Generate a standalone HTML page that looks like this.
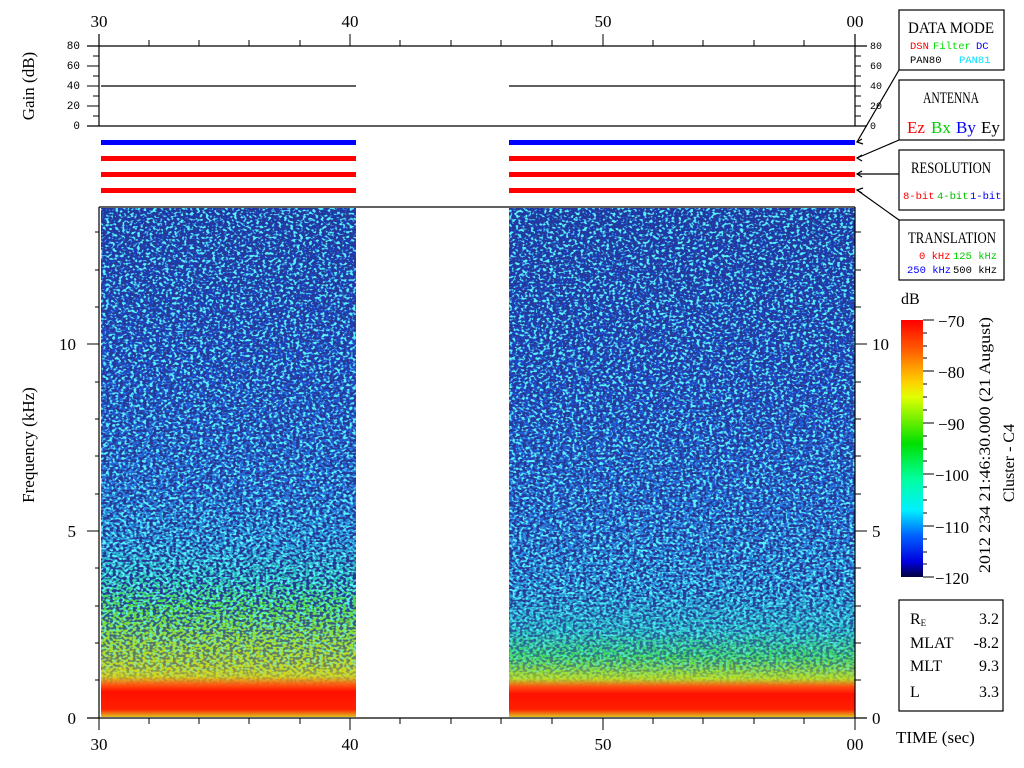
<!DOCTYPE html>
<html><head><meta charset="utf-8"><style>
html,body{margin:0;padding:0;background:#fff;width:1024px;height:768px;overflow:hidden}
svg{display:block}
.t{font-family:"Liberation Serif",serif;fill:#000}
.m{font-family:"Liberation Mono",monospace}
</style></head><body>
<svg width="1024" height="768" viewBox="0 0 1024 768" xmlns="http://www.w3.org/2000/svg">
<defs>
<linearGradient id="gL" x1="0" y1="0" x2="0" y2="1">
<stop offset="0" stop-color="#1a36b0"/>
<stop offset="0.3" stop-color="#1e4ad0"/>
<stop offset="0.55" stop-color="#2470e0"/>
<stop offset="0.66" stop-color="#28a0e0"/>
<stop offset="0.73" stop-color="#28c8b0"/>
<stop offset="0.78" stop-color="#50dc40"/>
<stop offset="0.85" stop-color="#a0e028"/>
<stop offset="0.92" stop-color="#d8d818"/>
<stop offset="0.935" stop-color="#ff6010"/>
<stop offset="0.95" stop-color="#ff1000"/>
<stop offset="0.985" stop-color="#ff2000"/>
<stop offset="1" stop-color="#e0c020"/>
</linearGradient>
<linearGradient id="gR" x1="0" y1="0" x2="0" y2="1">
<stop offset="0" stop-color="#1a36b0"/>
<stop offset="0.35" stop-color="#1e4ad0"/>
<stop offset="0.6" stop-color="#2470e0"/>
<stop offset="0.74" stop-color="#2898e0"/>
<stop offset="0.83" stop-color="#28c0c0"/>
<stop offset="0.88" stop-color="#40d860"/>
<stop offset="0.925" stop-color="#c0e020"/>
<stop offset="0.94" stop-color="#ff5010"/>
<stop offset="0.955" stop-color="#ff1000"/>
<stop offset="0.985" stop-color="#ff2000"/>
<stop offset="1" stop-color="#e0c020"/>
</linearGradient>
<linearGradient id="fade" x1="0" y1="0" x2="0" y2="1">
<stop offset="0" stop-color="#fff"/>
<stop offset="0.75" stop-color="#fff"/>
<stop offset="0.9" stop-color="#fff" stop-opacity="0.5"/>
<stop offset="0.94" stop-color="#fff" stop-opacity="0"/>
</linearGradient>
<mask id="mk"><rect x="101" y="208" width="754" height="509" fill="url(#fade)"/></mask>
<linearGradient id="cb" x1="0" y1="0" x2="0" y2="1">
<stop offset="0" stop-color="#ff0000"/>
<stop offset="0.12" stop-color="#ff6000"/>
<stop offset="0.24" stop-color="#ffd000"/>
<stop offset="0.3" stop-color="#e0ff00"/>
<stop offset="0.48" stop-color="#00e000"/>
<stop offset="0.62" stop-color="#00ffa0"/>
<stop offset="0.74" stop-color="#00f0ff"/>
<stop offset="0.84" stop-color="#0060ff"/>
<stop offset="0.94" stop-color="#0000e0"/>
<stop offset="1" stop-color="#000040"/>
</linearGradient>
<filter id="nz" x="0" y="0" width="100%" height="100%">
<feTurbulence type="fractalNoise" baseFrequency="0.3 0.4" numOctaves="1" seed="4"/>
<feColorMatrix type="matrix" values="0 0 0 0 0.02  0 0 0 0 0.04  0 0 0 0 0.3  0 0 0 -9 4.8"/>
</filter>
<filter id="nz2" x="0" y="0" width="100%" height="100%">
<feTurbulence type="fractalNoise" baseFrequency="0.32 0.38" numOctaves="1" seed="9"/>
<feColorMatrix type="matrix" values="0 0 0 0 0.1  0 0 0 0 0.9  0 0 0 0 1  0 0 0 9 -4.3"/>
</filter>
<clipPath id="cp"><rect x="101" y="208" width="255" height="509"/><rect x="509" y="208" width="346" height="509"/></clipPath>
</defs>

<rect x="101" y="208" width="255" height="509" fill="url(#gL)"/>
<rect x="509" y="208" width="346" height="509" fill="url(#gR)"/>
<g clip-path="url(#cp)" mask="url(#mk)">
<rect x="101" y="208" width="754" height="509" filter="url(#nz2)"/>
<rect x="101" y="208" width="754" height="509" filter="url(#nz)"/>
</g>

<g stroke="#000" stroke-width="1.2" fill="none">
<line x1="99" y1="207" x2="855" y2="207"/>
<line x1="99" y1="207" x2="99" y2="718"/>
<line x1="855" y1="207" x2="855" y2="718"/>
<line x1="87" y1="718" x2="867" y2="718"/>
<line x1="87" y1="46" x2="867" y2="46"/>
<line x1="87" y1="126" x2="867" y2="126"/>
<line x1="99" y1="34" x2="99" y2="126"/>
<line x1="855" y1="34" x2="855" y2="126"/>
<line x1="101" y1="86" x2="356" y2="86"/>
<line x1="509" y1="86" x2="855" y2="86"/>
</g>
<g stroke="#000" stroke-width="1">
<path d="M93 56H99M93 66H99M93 76H99M93 96H99M93 106H99M93 116H99M93 86H99M855 56H861M855 66H861M855 76H861M855 86H861M855 96H861M855 106H861M855 116H861"/>
<path d="M87 46H99M87 66H99M87 86H99M87 106H99M87 126H99"/>
<path d="M99 34V46M350 34V46M603 34V46M855 34V46M149 40V46M199 40V46M249 40V46M300 40V46M400 40V46M451 40V46M501 40V46M552 40V46M653 40V46M703 40V46M754 40V46M804 40V46"/>
<path d="M99 718V730M350 718V730M603 718V730M855 718V730M149 718V724M199 718V724M249 718V724M300 718V724M400 718V724M451 718V724M501 718V724M552 718V724M653 718V724M703 718V724M754 718V724M804 718V724"/>
<path d="M87 718H99M87 531H99M87 344H99M95 680H99M95 643H99M95 606H99M95 568H99M95 494H99M95 456H99M95 419H99M95 382H99M95 307H99M95 270H99M95 232H99"/>
<path d="M855 718H867M855 531H867M855 344H867M855 680H861M855 643H861M855 606H861M855 568H861M855 494H861M855 456H861M855 419H861M855 382H861M855 307H861M855 270H861M855 232H861"/>
</g>

<rect x="101" y="140" width="255" height="5" fill="#0000ff"/>
<rect x="509" y="140" width="346" height="5" fill="#0000ff"/>
<rect x="101" y="156" width="255" height="5" fill="#ff0000"/>
<rect x="509" y="156" width="346" height="5" fill="#ff0000"/>
<rect x="101" y="172" width="255" height="5" fill="#ff0000"/>
<rect x="509" y="172" width="346" height="5" fill="#ff0000"/>
<rect x="101" y="188" width="255" height="5" fill="#ff0000"/>
<rect x="509" y="188" width="346" height="5" fill="#ff0000"/>

<g class="t" font-size="17" text-anchor="middle">
<text x="99" y="27">30</text><text x="350" y="27">40</text><text x="603" y="27">50</text><text x="855" y="27">00</text>
<text x="99" y="750">30</text><text x="350" y="750">40</text><text x="603" y="750">50</text><text x="855" y="750">00</text>
</g>
<g class="t" font-size="17" text-anchor="end">
<text x="76" y="724">0</text><text x="76" y="537">5</text><text x="76" y="350">10</text>
</g>
<g class="t" font-size="17">
<text x="872" y="724">0</text><text x="872" y="537">5</text><text x="872" y="350">10</text>
</g>
<g class="m" font-size="11" text-anchor="end">
<text x="80" y="49">80</text><text x="80" y="69">60</text><text x="80" y="89">40</text><text x="80" y="109">20</text><text x="80" y="129">0</text>
</g>
<g class="m" font-size="10">
<text x="870" y="49">80</text><text x="870" y="69">60</text><text x="870" y="89">40</text><text x="870" y="109">20</text><text x="870" y="129">0</text>
</g>
<text class="t" font-size="17" transform="translate(34,86) rotate(-90)" text-anchor="middle">Gain (dB)</text>
<text class="t" font-size="17" transform="translate(34,445) rotate(-90)" text-anchor="middle">Frequency (kHz)</text>
<text class="t" font-size="17" x="896" y="743">TIME (sec)</text>

<g fill="none" stroke="#000" stroke-width="1.2">
<rect x="899" y="10" width="105" height="60"/>
<rect x="899" y="80" width="105" height="60"/>
<rect x="899" y="150" width="105" height="60"/>
<rect x="899" y="220" width="105" height="60"/>
<path d="M899 70L857 142M899 140L857 158M899 174H857M899 220L857 190"/>
<path d="M862 139L857 142L863 144M862 155L857 158L862 161M862 171L857 174L862 177M863 188L857 190L862 193"/>
<rect x="899" y="600" width="104" height="111"/>
</g>
<g class="t" font-size="16" text-anchor="middle" textLength="90">
<text x="951" y="33" textLength="86" lengthAdjust="spacingAndGlyphs">DATA MODE</text>
<text x="951" y="103" textLength="56" lengthAdjust="spacingAndGlyphs">ANTENNA</text>
<text x="951" y="173" textLength="80" lengthAdjust="spacingAndGlyphs">RESOLUTION</text>
<text x="952" y="243" textLength="88" lengthAdjust="spacingAndGlyphs">TRANSLATION</text>
</g>
<g class="m" font-size="10.5">
<text x="910" y="49" fill="#ff0000">DSN</text><text x="933" y="49" fill="#00e000">Filter</text><text x="976" y="49" fill="#0000ff">DC</text>
<text x="910" y="63">PAN80</text><text x="959" y="63" fill="#00e0ff">PAN81</text>
<text x="903" y="199" fill="#ff0000">8-bit</text><text x="937" y="199" fill="#00c000">4-bit</text><text x="970" y="199" fill="#0000ff">1-bit</text>
<text x="919" y="259" fill="#ff0000">0 kHz</text><text x="953" y="259" fill="#00d000">125 kHz</text>
<text x="907" y="273" fill="#0000ff">250 kHz</text><text x="953" y="273">500 kHz</text>
</g>
<g class="t" font-size="17">
<text x="907" y="133" fill="#ff0000">Ez</text><text x="931" y="133" fill="#00d000">Bx</text><text x="956" y="133" fill="#0000ff">By</text><text x="981" y="133">Ey</text>
</g>

<text class="t" font-size="16" x="901" y="304">dB</text>
<rect x="901" y="320" width="22" height="257" fill="url(#cb)"/>
<g stroke="#000" stroke-width="1">
<path d="M923 320H934M923 371H934M923 423H934M923 474H934M923 526H934M923 577H934M923 333H927M923 346H927M923 358H927M923 384H927M923 397H927M923 410H927M923 436H927M923 449H927M923 461H927M923 487H927M923 500H927M923 513H927M923 539H927M923 552H927M923 564H927"/>
</g>
<g class="t" font-size="17">
<text x="938" y="327">−70</text><text x="938" y="378">−80</text><text x="938" y="430">−90</text><text x="935" y="481" textLength="34" lengthAdjust="spacingAndGlyphs">−100</text><text x="935" y="533" textLength="34" lengthAdjust="spacingAndGlyphs">−110</text><text x="935" y="584" textLength="34" lengthAdjust="spacingAndGlyphs">−120</text>
</g>
<text class="t" font-size="16" transform="translate(990,445) rotate(-90)" text-anchor="middle" textLength="256" lengthAdjust="spacingAndGlyphs">2012 234 21:46:30.000 (21 August)</text>
<text class="t" font-size="16" transform="translate(1014,463) rotate(-90)" text-anchor="middle">Cluster - C4</text>

<g class="t" font-size="16">
<text x="910" y="624">R<tspan font-size="9" dy="2">E</tspan></text>
<text x="910" y="648">MLAT</text><text x="910" y="671">MLT</text><text x="910" y="697">L</text>
</g>
<g class="t" font-size="16" text-anchor="end">
<text x="999" y="624">3.2</text><text x="999" y="648">-8.2</text><text x="999" y="671">9.3</text><text x="999" y="697">3.3</text>
</g>
</svg>
</body></html>
